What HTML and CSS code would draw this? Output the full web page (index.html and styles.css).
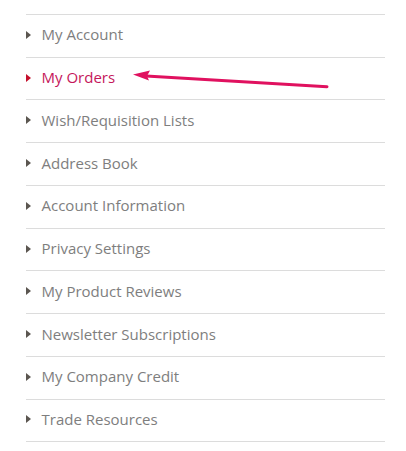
FILE: index.html
```html
<!DOCTYPE html>
<html lang="en">
<head>
    <meta charset="UTF-8">
    <meta name="viewport" content="width=device-width, initial-scale=1.0">
    <title>Account Menu</title>
    <link rel="stylesheet" href="styles.css">
</head>
<body>

<div class="account-nav">
    <ul class="nav-list">
        <li class="nav-item"><a href="#">My Account</a></li>
        <li class="nav-item current"><a href="#">My Orders</a></li>
        <li class="nav-item"><a href="#">Wish/Requisition Lists</a></li>
        <li class="nav-item"><a href="#">Address Book</a></li>
        <li class="nav-item"><a href="#">Account Information</a></li>
        <li class="nav-item"><a href="#">Privacy Settings</a></li>
        <li class="nav-item"><a href="#">My Product Reviews</a></li>
        <li class="nav-item"><a href="#">Newsletter Subscriptions</a></li>
        <li class="nav-item"><a href="#">My Company Credit</a></li>
        <li class="nav-item"><a href="#">Trade Resources</a></li>
    </ul>

    <!-- annotation arrow pointing at the current item -->
    <svg class="pointer" width="406" height="451" viewBox="0 0 406 451">
        <line x1="146" y1="75.9" x2="327" y2="86.7" stroke="#e0115f" stroke-width="3" stroke-linecap="round"/>
        <polygon points="133,74.6 150,70.4 147,75.9 149,80.4" fill="#e0115f"/>
    </svg>
</div>

</body>
</html>
```

FILE: styles.css
```css
body {
    margin: 0;
    padding: 0;
    background-color: #fff;
    font-family: "Open Sans", Arial, sans-serif;
}
.account-nav {
    position: relative;
    width: 406px;
    height: 451px;
}
.nav-list {
    list-style: none;
    margin: 0;
    padding: 14px 0 0 0;
    width: 359px;
    margin-left: 26px;
}
.nav-item {
    border-top: 1px solid #dcdcdc;
    height: 41.74px;
    display: flex;
    align-items: center;
}
.nav-item:last-child {
    border-bottom: 1px solid #dcdcdc;
}
.nav-item a {
    display: flex;
    align-items: center;
    color: #7e7e7e;
    font-size: 15px;
    line-height: 18px;
    margin-top: -3px;
    text-decoration: none;
}
.nav-item a::before {
    content: "";
    width: 0;
    height: 0;
    border-top: 4px solid transparent;
    border-bottom: 4px solid transparent;
    border-left: 5.5px solid #5b5650;
    margin-right: 10.5px;
    margin-top: 1px;
}
.nav-item.current a {
    color: #c5175b;
}
.nav-item.current a::before {
    border-left-color: #c4102c;
}
.pointer {
    position: absolute;
    top: 0;
    left: 0;
}
```
